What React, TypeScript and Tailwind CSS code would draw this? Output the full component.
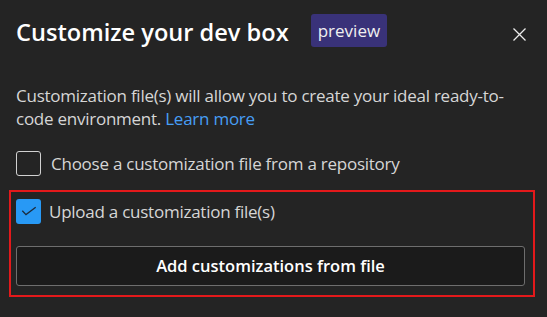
export default function App() {
    return (
        <div
            className="w-[547px] h-[317px] bg-[#242424] text-[#d6d6d6] overflow-hidden"
            style={{ fontFamily: '"Segoe UI", "Open Sans", "Noto Sans", sans-serif' }}
        >
            <div className="flex items-start pl-[16px] pr-[21px]">
                <h1 className="mt-[16px] text-[23.6px] font-semibold text-white leading-[32px]">Customize your dev box</h1>
                <span className="mt-[14px] ml-[22px] bg-[#393279] text-[#f0f0f0] text-[17px] leading-none rounded-[3px] px-[7px] h-[33px] flex items-center">preview</span>
                <button className="mt-[28px] ml-auto text-[#ececec]">
                    <svg width="13" height="13" viewBox="0 0 13 13" className="block">
                        <path d="M0.5 0.5 L12.5 12.5 M12.5 0.5 L0.5 12.5" stroke="currentColor" strokeWidth="1.3" />
                    </svg>
                </button>
            </div>

            <p className="mt-[36px] pl-[16px] pr-[30px] text-[17px] tracking-[-0.25px] leading-[23px]">
                Customization file(s) will allow you to create your ideal ready-to-code environment.{" "}
                <a className="text-[#479ef5]">Learn more</a>
            </p>

            <label className="mt-[21px] ml-[16px] flex items-center gap-[10px] text-[17px] tracking-[-0.25px] h-[25px]">
                <span className="w-[25px] h-[25px] border border-[#d1d1d1] rounded-[3px] shrink-0" />
                Choose a customization file from a repository
            </label>

            <div className="mt-[14px] ml-[9px] w-[526px] h-[107px] border-2 border-[#e3191b] pl-[5px] pt-[7px]">
                <label className="flex items-center gap-[8px] text-[17px] tracking-[-0.25px] h-[25px]">
                    <span className="w-[25px] h-[25px] bg-[#2899f5] rounded-[3px] shrink-0">
                        <svg width="25" height="25" viewBox="0 0 25 25" className="block">
                            <path d="M6.3 11.7 L10 15.6 L19.7 8.3" fill="none" stroke="#1c2b3d" strokeWidth="1.3" />
                        </svg>
                    </span>
                    Upload a customization file(s)
                </label>
                <button className="mt-[22px] w-[509px] h-[40px] bg-[#1b1b1b] border border-[#6e6e6e] rounded-[3px] text-white font-semibold text-[16.5px]">
                    Add customizations from file
                </button>
            </div>
        </div>
    );
}
